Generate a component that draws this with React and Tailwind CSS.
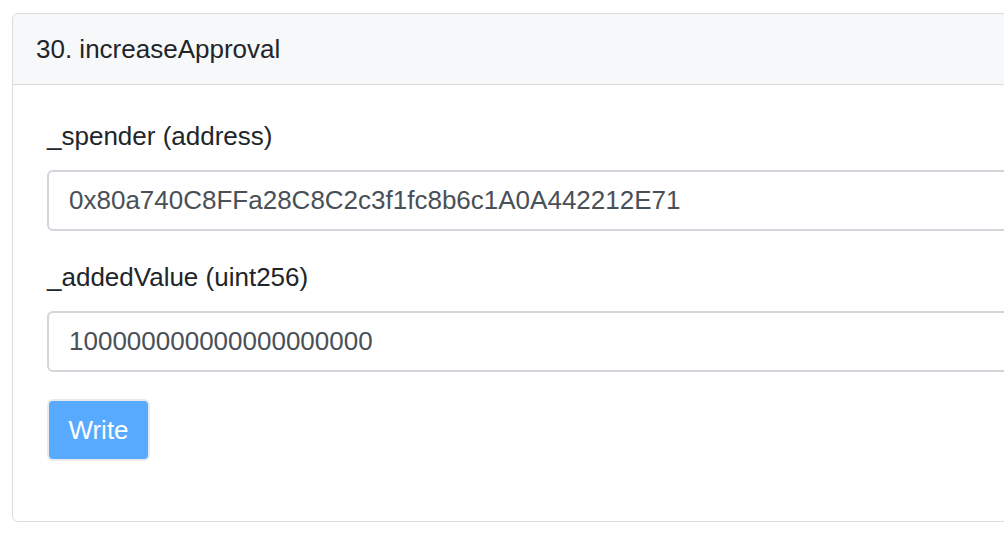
import React from 'react';

const fields = [
  { label: '_spender (address)', value: '0x80a740C8FFa28C8C2c3f1fc8b6c1A0A442212E71' },
  { label: '_addedValue (uint256)', value: '100000000000000000000' },
];

const App = () => {
  return (
    <div className="w-[1004px] h-[538px] overflow-hidden bg-white pt-[13px] pl-[12px] font-['Liberation_Sans',Arial,sans-serif]">
      <div className="w-[1020px] h-[509px] border border-[#dcdcdc] rounded-[6px] overflow-hidden">
        {/* header */}
        <div className="h-[71px] bg-[#f7f8fa] border-b border-[#dcdcdc] flex items-center pl-[23px] text-[26px] text-[#212529]">
          30. increaseApproval
        </div>

        {/* body */}
        <div className="pl-[34px] pt-[35px]">
          {fields.map((f, i) => (
            <div key={i} className={i > 0 ? 'mt-[30px]' : ''}>
              <div className="h-[33px] leading-[33px] text-[26px] text-[#212529]">{f.label}</div>
              <div className="mt-[17px] h-[61px] w-[1000px] border-2 border-[#d2d5da] rounded-[6px] flex items-center pl-[20px] text-[26px] text-[#495057]">
                {f.value}
              </div>
            </div>
          ))}

          <div className="mt-[27px] w-[103px] h-[62px] rounded-[6px] border-2 border-[#e8eaed] bg-[#58aaff] flex items-center justify-center text-white text-[26px]">
            Write
          </div>
        </div>
      </div>
    </div>
  );
};

export default App;
